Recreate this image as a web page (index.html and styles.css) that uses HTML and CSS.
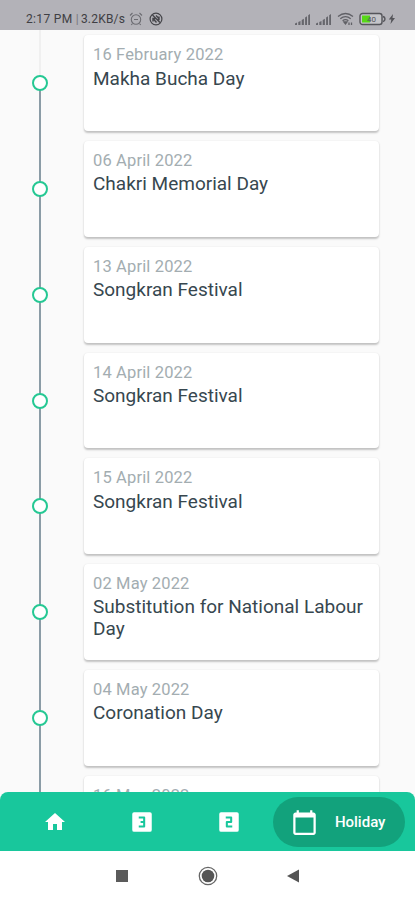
FILE: index.html
```html
<!DOCTYPE html>
<html lang="en">
<head>
<meta charset="utf-8">
<title>Holiday</title>
<link rel="stylesheet" href="styles.css">
</head>
<body>
<header class="status">
  <div class="status-left">
    <span class="clock">2:17 PM</span><span class="sep">|</span><span class="speed">3.2KB/s</span>
    <svg class="alarm" width="14" height="14" viewBox="0 0 14 14" fill="none" stroke="#6c6c72" stroke-width="1.1"><circle cx="7" cy="7.5" r="4.7"/><path d="M1 3.5 3.5 1M13 3.5 10.5 1M5 7.5h4M3.5 11.5l-1.2 1.5M10.5 11.5l1.2 1.5"/></svg>
    <svg class="globe" width="14" height="14" viewBox="0 0 14 14" fill="none" stroke="#45454a" stroke-width="1.2"><circle cx="7" cy="7" r="5.9"/><path d="M3.5 3 11 10.5M7 3.5 10 6.5M4 6.5l3.5 4M4 9.5V6.5h3M10 4.5v3H7.5" stroke-width="1.4"/></svg>
  </div>
  <div class="status-right">
    <svg class="signal" width="17" height="13" viewBox="0 0 17 13" fill="#66666c"><path d="M1 12V10.5L3 9.5V12zM4.3 12V9L6.5 7.9V12zM7.7 12V7L9.9 5.7V12zM11.1 12V4.6L13 3.2V12zM14.2 12V2.2L16 1V12z"/></svg>
    <svg class="signal" width="17" height="13" viewBox="0 0 17 13" fill="#66666c"><path d="M1 12V10.5L3 9.5V12zM4.3 12V9L6.5 7.9V12zM7.7 12V7L9.9 5.7V12zM11.1 12V4.6L13 3.2V12zM14.2 12V2.2L16 1V12z"/></svg>
    <svg class="wifi" width="17" height="14" viewBox="0 0 17 14" fill="none" stroke="#606066" stroke-width="1.3"><path d="M1 4.5Q8.5-1.5 16 4.5M3.3 6.7Q8.5 2.5 13.7 6.7M5.6 8.7Q8.5 6.5 11.4 8.7"/><path d="M7 10l1.5 2L10 10zM12 10.5v2.5M14.5 10.5v2.5"/></svg>
    <svg class="battery" width="27" height="14" viewBox="0 0 27 14"><rect x="1" y="1.5" width="22" height="11" rx="2.5" fill="#c5c5c9" stroke="#55555a" stroke-width="1.4"/><path d="M3 3.5h8v7H3z" fill="#57d816"/><path d="M24 4.5q2 .5 2 2.500t-2 2.500" fill="none" stroke="#55555a" stroke-width="1.4"/><text x="12.5" y="10" text-anchor="middle" class="level">40</text></svg>
    <svg class="bolt" width="8" height="12" viewBox="0 0 8 12"><path d="M5 1 .8 6.500h2.500L2.500 11 7 5H4.500z" fill="#55555a"/></svg>
  </div>
</header>

<main class="timeline">
  <article class="row first"><div class="rail"><i class="dot"></i></div><div class="card"><p class="date">16 February 2022</p><h2>Makha Bucha Day</h2></div></article>
  <article class="row"><div class="rail"><i class="dot"></i></div><div class="card"><p class="date">06 April 2022</p><h2>Chakri Memorial Day</h2></div></article>
  <article class="row"><div class="rail"><i class="dot"></i></div><div class="card"><p class="date">13 April 2022</p><h2>Songkran Festival</h2></div></article>
  <article class="row"><div class="rail"><i class="dot"></i></div><div class="card"><p class="date">14 April 2022</p><h2>Songkran Festival</h2></div></article>
  <article class="row"><div class="rail"><i class="dot"></i></div><div class="card"><p class="date">15 April 2022</p><h2>Songkran Festival</h2></div></article>
  <article class="row"><div class="rail"><i class="dot"></i></div><div class="card"><p class="date">02 May 2022</p><h2>Substitution for National Labour Day</h2></div></article>
  <article class="row"><div class="rail"><i class="dot"></i></div><div class="card"><p class="date">04 May 2022</p><h2>Coronation Day</h2></div></article>
  <article class="row"><div class="rail"><i class="dot"></i></div><div class="card"><p class="date">16 May 2022</p></div></article>
</main>

<nav class="tabs">
  <a class="tab"><svg width="24" height="24" viewBox="0 0 24 24" fill="#fff"><path d="M10 20v-6h4v6h5v-8h3L12 3 2 12h3v8z"/></svg></a>
  <a class="tab"><svg width="26" height="26" viewBox="0 0 24 24"><rect x="3" y="3" width="18" height="18" rx="1.7" fill="#fff"/><path d="M9 7.900h5v8.200H9M10.700 12H14" fill="none" stroke="#18c79c" stroke-width="1.9" stroke-linejoin="round"/></svg></a>
  <a class="tab"><svg width="26" height="26" viewBox="0 0 24 24"><rect x="3" y="3" width="18" height="18" rx="1.7" fill="#fff"/><path d="M9 7.900h5V12h-4v4.100h5" fill="none" stroke="#18c79c" stroke-width="1.9" stroke-linejoin="round"/></svg></a>
  <a class="tab active"><svg width="27" height="27" viewBox="0 0 24 24" fill="#fff"><path d="M20 3h-1V1h-2v2H7V1H5v2H4c-1.100 0-2 .9-2 2v16c0 1.100.9 2 2 2h16c1.100 0 2-.9 2-2V5c0-1.100-.9-2-2-2zm0 18H4V7.500h16V21z"/></svg><span>Holiday</span></a>
</nav>

<footer class="system">
  <svg width="14" height="14" viewBox="0 0 14 14"><rect x="1" y="1" width="12" height="12" fill="#5b5b5b"/></svg>
  <svg width="20" height="20" viewBox="0 0 20 20"><circle cx="10" cy="10" r="8.700" fill="none" stroke="#666" stroke-width="1.3"/><circle cx="10" cy="10" r="6.300" fill="#555"/></svg>
  <svg width="14" height="14" viewBox="0 0 14 14"><path d="M0 7 12 .5v13z" fill="#555"/></svg>
</footer>
</body>
</html>
```
FILE: styles.css
```css
* { box-sizing: border-box; }
body {
  margin: 0;
  height: 900px;
  display: flex;
  flex-direction: column;
  overflow: hidden;
  background: #fafafa;
  font-family: Roboto, "Liberation Sans", sans-serif;
}
p, h2 { margin: 0; font-weight: 400; }
svg { display: block; flex: none; }

.status {
  flex: 0 0 29px;
  display: flex;
  justify-content: space-between;
  padding: 8px 19px 0 26px;
  background: #b3b2b8;
  color: #3f3f44;
}
.status-left, .status-right { display: flex; align-items: center; height: 22px; }
.status-left { font-size: 12px; letter-spacing: .35px; }
.sep { margin: 0 2px 0 3px; color: #77777c; }
.speed { letter-spacing: .2px; }
.alarm { margin-left: 4px; }
.globe { margin-left: 6px; }
.signal { margin-right: 4px; }
.wifi { margin: 0 5px 0 1px; }
.bolt { margin-left: 2px; }
.level { font-size: 8px; fill: #55555a; }

.timeline { flex: 0 0 771px; padding-top: .4px; overflow: hidden; }
.row { height: 105.75px; display: flex; }
.rail {
  flex: 0 0 80px;
  display: grid;
  place-items: center;
  background: linear-gradient(#8b9ca6, #8b9ca6) 39px 0 / 2px 100% no-repeat;
}
.first .rail { background-image: linear-gradient(#f0f0f0 50%, #8b9ca6 50%); }
.dot { width: 16px; height: 16px; border: 2px solid #25c893; border-radius: 50%; background: #fff; }
.card {
  width: 295px;
  margin: 5px 0 5px 4px;
  padding: 10px 8px 0 9px;
  border-radius: 4px;
  background: #fff;
  box-shadow: 0 1.5px 2px rgba(0, 0, 0, .22), 0 0 2px rgba(0, 0, 0, .04);
}
.date { font-size: 16.5px; line-height: 20px; letter-spacing: .15px; color: #a3adb1; }
h2 { margin-top: 2.3px; font-size: 19px; line-height: 22px; color: #37474f; }

.tabs {
  position: relative;
  flex: 0 0 59px;
  margin-top: -9px;
  padding: 5px 10px 4px 11px;
  display: flex;
  border-radius: 8px 8px 0 0;
  background: #18c79c;
}
.tab { flex: 0 0 87.3px; display: flex; align-items: center; justify-content: center; }
.tab.active {
  flex: 0 0 132px;
  justify-content: flex-start;
  padding-left: 18px;
  gap: 17px;
  border-radius: 25px;
  background: #12a27c;
  color: #fff;
  font-size: 15px;
  font-weight: 500;
}
.system {
  flex: 0 0 50px;
  display: flex;
  align-items: center;
  justify-content: center;
  gap: 69px;
  background: #fff;
}
```
